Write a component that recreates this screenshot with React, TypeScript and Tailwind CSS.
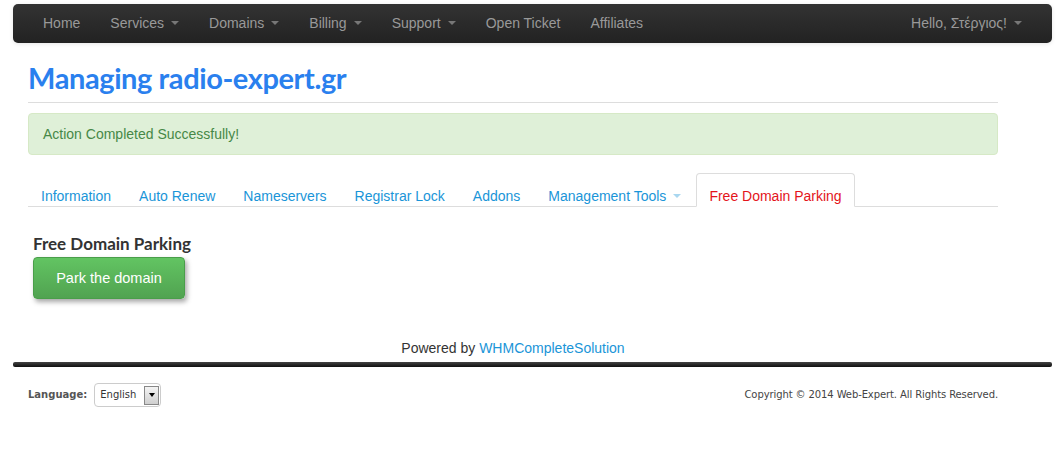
import { useState } from "react";

const navItems = [
  { label: "Home", caret: false },
  { label: "Services", caret: true },
  { label: "Domains", caret: true },
  { label: "Billing", caret: true },
  { label: "Support", caret: true },
  { label: "Open Ticket", caret: false },
  { label: "Affiliates", caret: false },
];

const tabs = [
  { label: "Information", caret: false },
  { label: "Auto Renew", caret: false },
  { label: "Nameservers", caret: false },
  { label: "Registrar Lock", caret: false },
  { label: "Addons", caret: false },
  { label: "Management Tools", caret: true },
  { label: "Free Domain Parking", caret: false },
];

function Caret({ className }: { className: string }) {
  return (
    <span
      className={`ml-[7px] inline-block h-0 w-0 border-x-4 border-t-4 border-x-transparent align-middle ${className}`}
    />
  );
}

export default function App() {
  const [active, setActive] = useState("Free Domain Parking");

  return (
    <div className="min-h-[456px] bg-white font-['Liberation_Sans',Arial,sans-serif] text-[14px] leading-5 text-[#333]">
      {/* Navbar */}
      <div className="ml-[13px] mr-[9px] pt-[4px]">
        <div className="flex h-[39px] items-center justify-between rounded-[5px] bg-gradient-to-b from-[#333] to-[#222] px-[15px] shadow-[0_1px_4px_rgba(0,0,0,0.1)]">
          <ul className="flex">
            {navItems.map((item) => (
              <li key={item.label}>
                <a className="flex items-center px-[15px] pb-[11px] pt-[9px] text-[#999]">
                  {item.label}
                  {item.caret && <Caret className="border-t-[#777]" />}
                </a>
              </li>
            ))}
          </ul>
          <a className="flex items-center px-[15px] pb-[11px] pt-[9px] text-[#999]">
            Hello, Στέργιος!
            <Caret className="border-t-[#777]" />
          </a>
        </div>
      </div>

      {/* Main content */}
      <div className="mx-[28px] w-[970px]">
        <div className="border-b border-[#ddd] pb-[4px] pt-[15px]">
          <h1 className="font-['Lato',sans-serif] text-[29px] font-bold leading-[40px] tracking-[-0.4px] text-[#2a80ee]">
            Managing radio-expert.gr
          </h1>
        </div>

        <div className="mt-[10px] rounded-[4px] border border-[#d6e9c6] bg-[#dff0d8] px-[14px] py-[10px] text-[#468847]">
          Action Completed Successfully!
        </div>

        <ul className="mt-[18px] flex border-b border-[#ddd]">
          {tabs.map((tab) => {
            const isActive = tab.label === active;
            return (
              <li key={tab.label} className="-mb-px mr-[2px]">
                <a
                  onClick={() => setActive(tab.label)}
                  className={`flex cursor-pointer items-center rounded-t-[4px] border px-[12px] pb-0 pt-[12px] leading-5 ${
                    isActive
                      ? "border-[#ddd] border-b-transparent bg-white text-[#e4141b]"
                      : "border-transparent text-[#1a95d8]"
                  }`}
                >
                  {tab.label}
                  {tab.caret && <Caret className="border-t-[#a9d7f0]" />}
                </a>
              </li>
            );
          })}
        </ul>

        <div className="px-[5px] pt-[27px]">
          <h4 className="font-['Lato',sans-serif] text-[17px] font-bold leading-5 text-[#333]">
            Free Domain Parking
          </h4>
          <button className="mt-[3px] h-[42px] w-[152px] rounded-[4px] border border-[#4a9e4a] bg-gradient-to-b from-[#62c462] to-[#51a351] text-[14.5px] text-white shadow-[2px_3px_5px_rgba(0,0,0,0.35)]">
            Park the domain
          </button>
        </div>

        <p className="mt-[39px] text-center leading-5 text-[#333]">
          Powered by <a className="text-[#1a95d8]">WHMCompleteSolution</a>
        </p>
      </div>

      {/* Footer */}
      <div className="ml-[13px] mr-[9px] mt-[4px] h-[5px] rounded-[2px] bg-gradient-to-b from-[#444] to-[#111]" />
      <div className="mx-[28px] mt-[16px] flex w-[970px] items-center justify-between text-[11px]">
        <div className="flex items-center">
          <span className="font-['DejaVu_Sans',sans-serif] text-[10px] font-bold text-[#555]">Language:</span>
          <div className="ml-[7px] flex h-[24px] w-[67px] items-center rounded-[4px] border border-[#ccc] bg-white pl-[5px] pr-[1px]">
            <span className="flex-1 font-['DejaVu_Sans',sans-serif] text-[10px] text-[#333]">English</span>
            <span className="flex h-[19px] w-[15px] items-center justify-center border border-[#888] bg-gradient-to-b from-[#f4f4f4] to-[#cfcfcf]">
              <span className="h-0 w-0 border-x-[3px] border-t-[4px] border-x-transparent border-t-black" />
            </span>
          </div>
        </div>
        <span className="font-['DejaVu_Sans',sans-serif] text-[10px] tracking-[-0.1px] text-[#444]">
          Copyright © 2014 Web-Expert. All Rights Reserved.
        </span>
      </div>
    </div>
  );
}
